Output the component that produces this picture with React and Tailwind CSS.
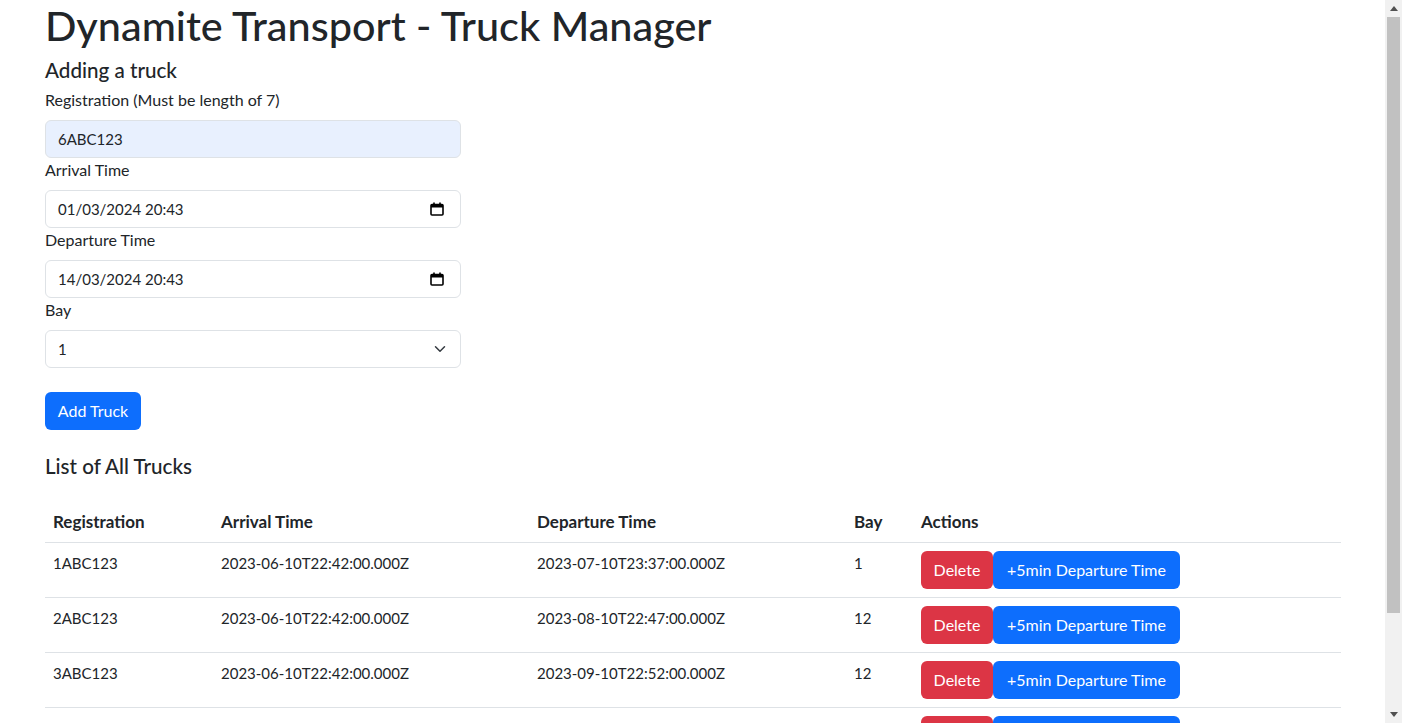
import React from 'react';

const trucks = [
  { reg: '1ABC123', arrival: '2023-06-10T22:42:00.000Z', departure: '2023-07-10T23:37:00.000Z', bay: '1' },
  { reg: '2ABC123', arrival: '2023-06-10T22:42:00.000Z', departure: '2023-08-10T22:47:00.000Z', bay: '12' },
  { reg: '3ABC123', arrival: '2023-06-10T22:42:00.000Z', departure: '2023-09-10T22:52:00.000Z', bay: '12' },
  { reg: '4ABC123', arrival: '2023-06-10T22:42:00.000Z', departure: '2023-10-10T22:57:00.000Z', bay: '3' },
  { reg: '5ABC123', arrival: '2023-06-10T22:42:00.000Z', departure: '2023-11-10T23:02:00.000Z', bay: '4' },
];

const CalendarIcon = () => (
  <svg width="14" height="14" viewBox="0 0 14 14" className="text-black">
    <rect x="1" y="2.5" width="12" height="10.5" rx="1" fill="none" stroke="currentColor" strokeWidth="1.6" />
    <rect x="1" y="2.5" width="12" height="3" fill="currentColor" />
    <rect x="3.2" y="0.5" width="1.6" height="3" fill="currentColor" />
    <rect x="9.2" y="0.5" width="1.6" height="3" fill="currentColor" />
  </svg>
);

const Label = ({ children, className = '' }) => (
  <label className={`block leading-6 ${className}`}>{children}</label>
);

const DateField = ({ value }) => (
  <div className="flex items-center justify-between h-[38px] w-[416px] rounded-md border border-[#dee2e6] bg-white pl-3 pr-[16px] text-[15px]">
    <span>{value}</span>
    <CalendarIcon />
  </div>
);

const Scrollbar = () => (
  <div className="fixed right-0 top-0 flex h-full w-[17px] flex-col items-center bg-[#f1f1f1]">
    <div className="flex h-[17px] w-full items-center justify-center">
      <svg width="8" height="5" viewBox="0 0 8 5"><path d="M0 5 4 0 8 5Z" fill="#505050" /></svg>
    </div>
    <div className="h-[596px] w-[13px] bg-[#c1c1c1]" />
    <div className="flex-1" />
    <div className="flex h-[17px] w-full items-center justify-center">
      <svg width="8" height="5" viewBox="0 0 8 5"><path d="M0 0 4 5 8 0Z" fill="#505050" /></svg>
    </div>
  </div>
);

const App = () => {
  return (
    <div
      className="min-h-screen bg-white pl-[45px] pr-[61px] pb-10 text-[16px] text-[#212529]"
      style={{ fontFamily: 'Lato, "Open Sans", sans-serif' }}
    >
      <h1 className="pt-[1px] text-[41.4px] leading-[48px] font-medium mb-[7px]">Dynamite Transport - Truck Manager</h1>
      <h4 className="text-[20.6px] leading-[29px] font-medium mb-[3px]">Adding a truck</h4>

      <div>
        <Label className="mb-2">Registration (Must be length of 7)</Label>
        <div className="flex items-center h-[38px] w-[416px] rounded-md border border-[#dee2e6] bg-[#e8f0fe] px-3 text-[15px]">
          6ABC123
        </div>

        <Label>Arrival Time</Label>
        <div className="mt-2">
          <DateField value="01/03/2024 20:43" />
        </div>

        <Label>Departure Time</Label>
        <div className="mt-2">
          <DateField value="14/03/2024 20:43" />
        </div>

        <Label>Bay</Label>
        <div className="mt-2 flex items-center justify-between h-[38px] w-[416px] rounded-md border border-[#dee2e6] bg-white pl-3 pr-[14px] text-[15px]">
          <span>1</span>
          <svg width="12" height="12" viewBox="0 0 16 16" fill="none" stroke="#343a40" strokeWidth="2" strokeLinecap="round" strokeLinejoin="round">
            <path d="m2 5 6 6 6-6" />
          </svg>
        </div>

        <button className="mt-6 h-[38px] w-[96px] rounded-md bg-[#0d6efd] text-white">Add Truck</button>
      </div>

      <h4 className="mt-[22px] text-[20.6px] leading-[29px] font-medium mb-[21px]">List of All Trucks</h4>

      <table className="w-full border-collapse">
        <thead>
          <tr className="border-b border-[#dee2e6] text-[17px]">
            <th className="w-[168px] px-2 py-2 text-left font-bold leading-6">Registration</th>
            <th className="w-[316px] px-2 py-2 text-left font-bold leading-6">Arrival Time</th>
            <th className="w-[317px] px-2 py-2 text-left font-bold leading-6">Departure Time</th>
            <th className="w-[67px] px-2 py-2 text-left font-bold leading-6">Bay</th>
            <th className="px-2 py-2 text-left font-bold leading-6">Actions</th>
          </tr>
        </thead>
        <tbody>
          {trucks.map((t) => (
            <tr key={t.reg} className="border-b border-[#dee2e6] align-top text-[15px]">
              <td className="px-2 py-2 leading-6">{t.reg}</td>
              <td className="px-2 py-2 leading-6">{t.arrival}</td>
              <td className="px-2 py-2 leading-6">{t.departure}</td>
              <td className="px-2 py-2 leading-6">{t.bay}</td>
              <td className="px-2 py-2 text-[16px]">
                <div className="flex">
                  <button className="h-[38px] w-[72px] rounded-md bg-[#dc3545] text-white">Delete</button>
                  <button className="h-[38px] w-[187px] rounded-md bg-[#0d6efd] text-white">+5min Departure Time</button>
                </div>
              </td>
            </tr>
          ))}
        </tbody>
      </table>
      <Scrollbar />
    </div>
  );
};

export default App;
